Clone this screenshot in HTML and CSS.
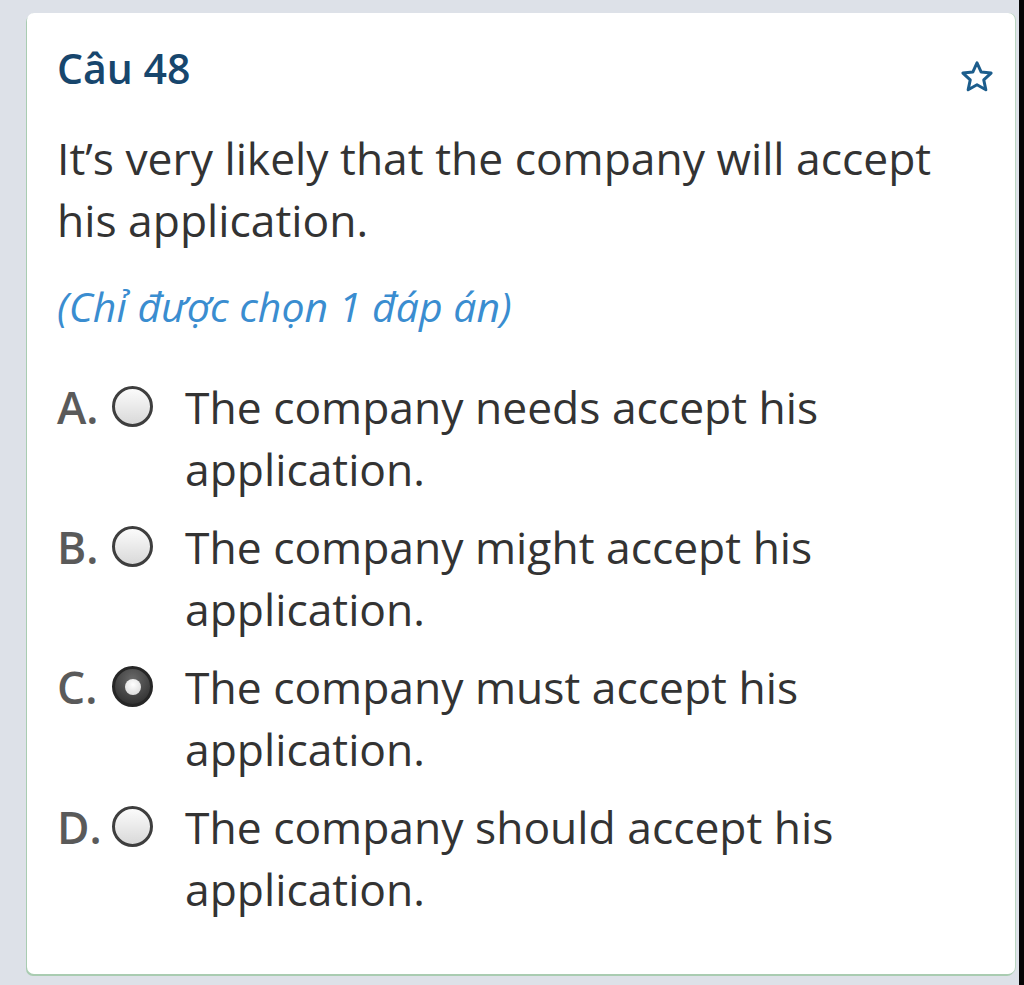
FILE: index.html
```html
<!DOCTYPE html>
<html lang="vi">
<head>
<meta charset="utf-8">
<title>Câu 48</title>
<link rel="stylesheet" href="styles.css">
</head>
<body>
<div class="page">
  <div class="card">
    <div class="card-head">
      <h2 class="title">Câu 48</h2>
      <svg class="star" viewBox="0 0 24 24" width="36" height="36" aria-hidden="true">
        <path d="M12 2.6l2.8 6.1 6.6.7-4.9 4.5 1.4 6.6L12 17.2l-5.9 3.3 1.4-6.6-4.9-4.5 6.6-.7z" fill="none" stroke="#1c5d8c" stroke-width="2" stroke-linejoin="round"/>
      </svg>
    </div>
    <p class="question">It’s very likely that the company will accept his application.</p>
    <p class="hint">(Chỉ được chọn 1 đáp án)</p>
    <ul class="options">
      <li class="option"><span class="letter">A.</span><span class="radio"></span><span class="text">The company needs accept his application.</span></li>
      <li class="option"><span class="letter">B.</span><span class="radio"></span><span class="text">The company might accept his application.</span></li>
      <li class="option"><span class="letter">C.</span><span class="radio checked"></span><span class="text">The company must accept his application.</span></li>
      <li class="option"><span class="letter">D.</span><span class="radio"></span><span class="text">The company should accept his application.</span></li>
    </ul>
  </div>
</div>
<div class="edge"></div>
</body>
</html>
```
FILE: styles.css
```css
html, body {
  margin: 0;
  padding: 0;
  height: 100%;
}
body {
  display: flex;
  background: #dde1e8;
  font-family: "Open Sans", "Noto Sans", sans-serif;
  color: #333;
  overflow: hidden;
}
.page {
  flex: 1;
  padding: 13px 4px 0 27px;
}
.edge {
  width: 5px;
  background: #050505;
}
.card {
  background: #fff;
  border-radius: 7px;
  padding: 27px 20px 54px 30px;
  box-shadow: -1px 2px 0 #a9ccb1, 1px 0 0 #b9d6c0;
}
.card-head {
  display: flex;
  justify-content: space-between;
  align-items: flex-start;
}
.title {
  margin: 0;
  font-size: 41px;
  font-weight: 600;
  line-height: 57px;
  color: #17466d;
}
.star {
  margin-top: 19px;
}
.question {
  margin: 30px 0 0;
  max-width: 900px;
  font-size: 44.4px;
  line-height: 62px;
  color: #333;
}
.hint {
  margin: 30px 0 0;
  font-size: 41px;
  line-height: 50px;
  font-style: italic;
  color: #3a8dd0;
}
.options {
  list-style: none;
  margin: 45px 0 0;
  padding: 0;
  display: flex;
  flex-direction: column;
  gap: 16px;
}
.option {
  display: grid;
  grid-template-columns: 55px 41px 1fr;
  font-size: 44.4px;
  line-height: 62px;
}
.letter {
  font-weight: 600;
  color: #5a5a5a;
}
.text {
  margin-left: 32px;
  color: #333;
  padding-right: 80px;
}
.radio {
  width: 41px;
  height: 41px;
  box-sizing: border-box;
  margin-top: 10px;
  border-radius: 50%;
  border: 3px solid #3e3e3e;
  background: linear-gradient(#fbfbfb, #d9d9d9);
  position: relative;
}
.radio.checked {
  background: radial-gradient(circle at 50% 30%, #6a6a6a, #262626);
  border-color: #262626;
}
.radio.checked::after {
  content: "";
  position: absolute;
  left: 50%;
  top: 50%;
  width: 16px;
  height: 16px;
  margin: -8px 0 0 -8px;
  border-radius: 50%;
  background: radial-gradient(circle at 50% 35%, #fff, #d4d4d4);
}
```
